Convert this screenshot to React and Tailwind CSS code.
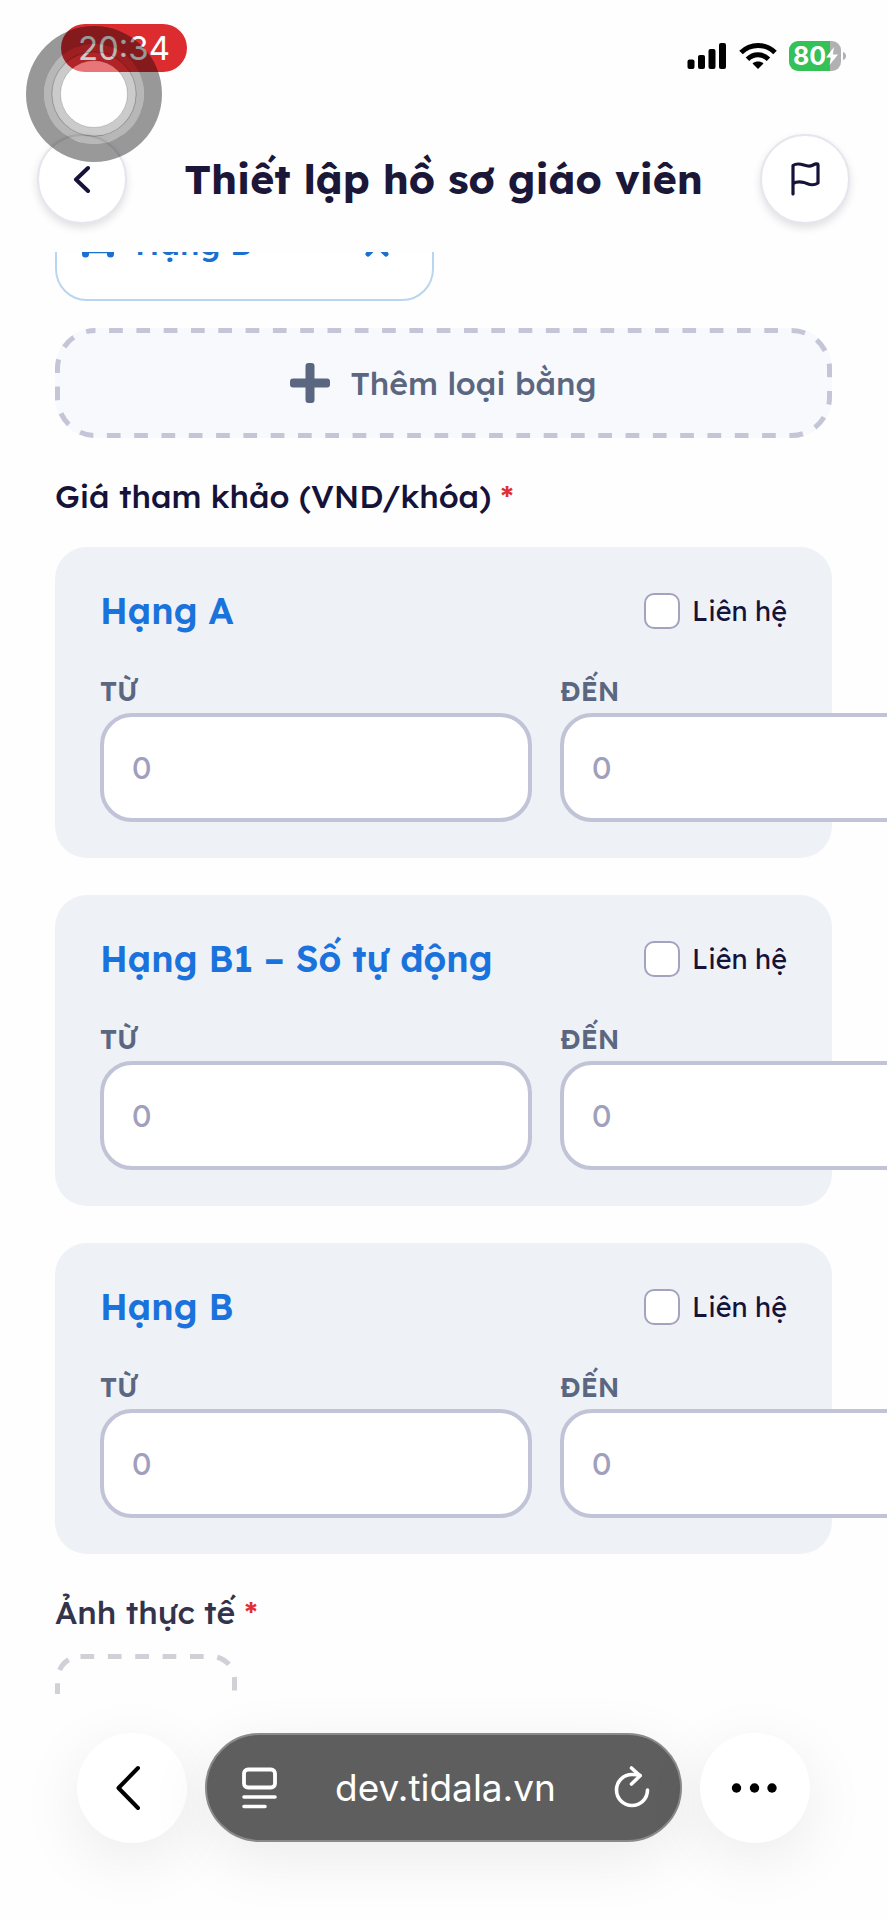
import React, { useState } from "react";

const licenseClasses = [
  { id: "a", name: "Hạng A" },
  { id: "b1", name: "Hạng B1 – Số tự động" },
  { id: "b", name: "Hạng B" },
];

const DashedBorder = ({ radius, dash, offset, className }) => (
  <svg
    className={`absolute inset-0 h-full w-full fill-none ${className}`}
    aria-hidden="true"
  >
    <rect
      x="2.5"
      y="2.5"
      rx={radius}
      className="h-[calc(100%-5px)] w-[calc(100%-5px)]"
      strokeWidth="5"
      strokeDasharray={dash}
      strokeDashoffset={offset}
    />
  </svg>
);

const StatusBar = () => (
  <div className="flex h-24 items-center justify-between pl-[61px] pr-[41px]">
    <span className="flex h-12 w-[126px] items-center justify-center rounded-full bg-[#dc2c30] font-['Inter',sans-serif] text-[33px] leading-10 text-white">
      20:34
    </span>

    <div className="flex items-center pt-4">
      {/* Signal */}
      <svg className="h-7 w-10" viewBox="0 0 40 28" aria-hidden="true">
        <rect x="0.5" y="17.5" width="7" height="9.5" rx="2" />
        <rect x="11" y="13" width="7" height="14" rx="2" />
        <rect x="21.5" y="7" width="7" height="20" rx="2" />
        <rect x="32" y="1" width="7" height="26" rx="2" />
      </svg>
      {/* Wifi */}
      <svg className="ml-3 h-7 w-[38px]" viewBox="0 0 38 28" aria-hidden="true">
        <g fill="none" stroke="#000" strokeWidth="5">
          <path d="M2 10.5C11.500 1 26.500 1 36 10.500" />
          <path d="M8.500 17.200C14.500 11.300 23.500 11.300 29.500 17.200" />
        </g>
        <path d="M13.500 21.500C16.500 18.900 21.500 18.900 24.500 21.500L19 27z" />
      </svg>
      {/* Battery */}
      <div className="ml-3 flex h-[30px] w-[52px] items-center rounded-[9px] bg-[linear-gradient(90deg,#34c157_79%,#b1b1b3_79%)] pl-1">
        <span className="font-['Inter',sans-serif] text-[25px] leading-[30px] font-bold text-white">
          80
        </span>
        <svg className="h-[18px] w-3 shrink-0" viewBox="0 0 12 18" aria-hidden="true">
          <path d="M8 0L0 10.500H5L3.500 18L12 7.500H6.800z" fill="#fff" />
        </svg>
      </div>
      <svg className="ml-[2px] h-2 w-[3px]" viewBox="0 0 3 8" aria-hidden="true">
        <path d="M0 0C4 1 4 7 0 8z" fill="#b1b1b3" />
      </svg>
    </div>
  </div>
);

const AssistiveTouch = () => (
  <div className="pointer-events-none absolute top-[26px] left-[26px] z-20">
    <svg className="h-[136px] w-[136px]" viewBox="0 0 136 136" aria-hidden="true">
      <path
        fillRule="evenodd"
        fill="#000"
        fillOpacity="0.4"
        d="M68 0a68 68 0 1 0 0 136a68 68 0 1 0 0-136zM68 18a50 50 0 1 1 0 100a50 50 0 1 1 0-100z"
      />
      <circle cx="68" cy="68" r="46" fill="none" stroke="#000" strokeOpacity="0.28" strokeWidth="8" />
      <circle cx="68" cy="68" r="38" fill="none" stroke="#000" strokeOpacity="0.2" strokeWidth="9" />
      <circle cx="68" cy="68" r="42" fill="none" stroke="#000" strokeOpacity="0.12" strokeWidth="1" />
      <circle cx="68" cy="68" r="33.500" fill="#fff" fillOpacity="0.35" stroke="#000" strokeOpacity="0.18" strokeWidth="1" />
    </svg>
  </div>
);

const PriceCard = ({ id, name }) => {
  const [contact, setContact] = useState(false);

  return (
    <section className="rounded-[32px] bg-[#eef1f6] px-[45px] pt-[45px] pb-9">
      <div className="flex items-center justify-between">
        <h2 className="text-[36px] leading-[38px] font-semibold text-[#1a73dc]">{name}</h2>
        <label className="flex items-center gap-3 text-[27px] leading-[38px] text-[#16133a]">
          <input
            type="checkbox"
            checked={contact}
            onChange={(e) => setContact(e.target.checked)}
            className="h-9 w-9 appearance-none rounded-[10px] border-2 border-[#a3a3bf] bg-white checked:bg-[#1a73dc]"
          />
          Liên hệ
        </label>
      </div>

      <div className="mt-[41px] flex gap-7">
        {[
          ["from", "TỪ"],
          ["to", "ĐẾN"],
        ].map(([key, label]) => (
          <div key={key} className="shrink-0">
            <label
              htmlFor={`${id}-${key}`}
              className="mb-[2px] block text-[27px] leading-10 font-semibold text-[#5b6780]"
            >
              {label}
            </label>
            <input
              id={`${id}-${key}`}
              type="text"
              inputMode="numeric"
              placeholder="0"
              className="block h-[109px] w-[432px] rounded-[32px] border-4 border-[#c1c3d7] bg-white px-7 pb-[2px] text-[32px] placeholder:text-[#a09fbd]"
            />
          </div>
        ))}
      </div>
    </section>
  );
};

const FieldTitle = ({ children, className }) => (
  <h2 className={`text-[32px] leading-[42px] font-medium ${className}`}>
    {children} <span className="text-[#e02f35]">*</span>
  </h2>
);

const App = () => {
  return (
    <div className="relative flex h-screen flex-col overflow-hidden bg-[#fefefe] font-['Lexend','Inter',sans-serif]">
      <AssistiveTouch />

      <header className="h-[252px] shrink-0">
        <StatusBar />
        <div className="flex items-center justify-between px-[37px] pt-[38px]">
          <button
            aria-label="Quay lại"
            className="flex h-[90px] w-[90px] items-center justify-center rounded-full border-2 border-[#e6e6ee] bg-white shadow-[0_4px_8px_rgba(0,0,0,0.12)]"
          >
            <svg className="h-7 w-7" viewBox="0 0 28 28" fill="none" aria-hidden="true">
              <path d="M20 3L8 14.500L20 26" stroke="#16133a" strokeWidth="4" strokeLinecap="round" strokeLinejoin="round" />
            </svg>
          </button>
          <h1 className="text-[41px] leading-[48px] font-bold text-[#1a1739]">
            Thiết lập hồ sơ giáo viên
          </h1>
          <button
            aria-label="Báo cáo"
            className="flex h-[90px] w-[90px] items-center justify-center rounded-full border-2 border-[#e6e6ee] bg-white shadow-[0_4px_8px_rgba(0,0,0,0.12)]"
          >
            <svg className="h-10 w-10" viewBox="0 0 40 40" fill="none" aria-hidden="true">
              <path
                d="M8 35V6.500C15 1.500 21 9.500 27 6.500C30 5 33 4 33 6V24C27 28 23 24.500 19 23.500C15 22.500 11.500 22.500 8 24.500"
                stroke="#16133a"
                strokeWidth="3.200"
                strokeLinecap="round"
                strokeLinejoin="round"
              />
            </svg>
          </button>
        </div>
      </header>

      <main className="min-h-0 flex-1 overflow-hidden px-[55px]">
        {/* Selected license, scrolled partly under the header */}
        <div className="-mt-[67px] flex h-[116px] w-[379px] items-center rounded-[32px] border-2 border-[#b9d5ef] bg-white pr-10 pl-6 text-[#1a6fd0]">
          <svg className="h-9 w-9" viewBox="0 0 36 36" fill="none" stroke="currentColor" aria-hidden="true">
            <path d="M3 16L7 5H27L31 16V27.500H3zM3 16H31" strokeWidth="1.500" />
            <path d="M4.500 23V29M29.500 23V29" strokeWidth="7" strokeLinecap="round" />
          </svg>
          <span className="ml-[18px] text-[32px] leading-10 font-medium">Hạng B</span>
          <button aria-label="Xóa" className="ml-auto">
            <svg className="h-8 w-8" viewBox="0 0 32 32" fill="none" aria-hidden="true">
              <path d="M8 9L26 27M26 9L8 27" stroke="currentColor" strokeWidth="5" strokeLinecap="round" />
            </svg>
          </button>
        </div>

        <button className="relative mt-[27px] flex h-[110px] w-full items-center justify-center gap-5 rounded-[40px] bg-[#f8f9fc] text-[32px] font-medium text-[#5b6780]">
          <DashedBorder radius="38" dash="13.7 13.6" offset="13.7" className="stroke-[#c5c5d8]" />
          <svg className="h-10 w-10" viewBox="0 0 40 40" fill="currentColor" aria-hidden="true">
            <rect x="15.500" y="0" width="9" height="40" rx="3" />
            <rect x="0" y="15.500" width="40" height="9" rx="3" />
          </svg>
          Thêm loại bằng
        </button>

        <FieldTitle className="mt-[37px] text-[#16133a]">Giá tham khảo (VND/khóa)</FieldTitle>

        <div className="mt-[30px] flex flex-col gap-[37px]">
          {licenseClasses.map((item) => (
            <PriceCard key={item.id} id={item.id} name={item.name} />
          ))}
        </div>

        <FieldTitle className="mt-[37px] text-[#33344c]">Ảnh thực tế</FieldTitle>
        <button aria-label="Thêm ảnh" className="relative mt-[21px] block h-[176px] w-[182px] rounded-[26px]">
          <DashedBorder radius="23" dash="13.7 13.67" offset="0" className="stroke-[#d0d0d6]" />
        </button>
      </main>

      {/* Browser toolbar */}
      <footer className="flex h-[226px] shrink-0 justify-center gap-[18px] px-[77px] pt-[39px]">
        <button
          aria-label="Trang trước"
          className="flex h-[110px] w-[110px] shrink-0 items-center justify-center rounded-full bg-white shadow-[0_16px_64px_rgba(0,0,0,0.08)]"
        >
          <svg className="h-12 w-12" viewBox="0 0 48 48" fill="none" aria-hidden="true">
            <path d="M30 4L10.500 24L30 44" stroke="#000" strokeWidth="4" strokeLinecap="round" strokeLinejoin="round" />
          </svg>
        </button>
        <div className="flex h-[109px] flex-1 items-center justify-between rounded-full border-2 border-[#8a8a8a] bg-[#5e5e5e] pr-7 pl-8 text-white shadow-[0_16px_64px_rgba(0,0,0,0.08)]">
          <button aria-label="Trình đọc">
            <svg className="h-11 w-10" viewBox="0 0 40 44" fill="none" stroke="currentColor" strokeLinecap="round" aria-hidden="true">
              <rect x="5" y="3.500" width="31" height="18" rx="4" strokeWidth="3.800" />
              <path d="M5 31H36M5 40.500H26" strokeWidth="3.600" />
            </svg>
          </button>
          <a href="#" className="font-['Inter',sans-serif] text-[37px] leading-[44px]">
            dev.tidala.vn
          </a>
          <button aria-label="Tải lại">
            <svg className="h-11 w-10" viewBox="0 0 40 44" fill="none" stroke="currentColor" strokeWidth="3.600" strokeLinecap="round" strokeLinejoin="round" aria-hidden="true">
              <path d="M35.500 24A15.500 15.500 0 1 1 20 8.500C23 8.500 26 8.700 28 9.500" />
              <path d="M19.500 2L28 9.800L19.500 18" />
            </svg>
          </button>
        </div>
        <button
          aria-label="Thêm"
          className="flex h-[110px] w-[110px] shrink-0 items-center justify-center rounded-full bg-white shadow-[0_16px_64px_rgba(0,0,0,0.08)]"
        >
          <svg className="h-3 w-12" viewBox="0 0 48 12" aria-hidden="true">
            <circle cx="5.500" cy="6" r="4.700" />
            <circle cx="23.500" cy="6" r="4.700" />
            <circle cx="41" cy="6" r="4.700" />
          </svg>
        </button>
      </footer>
    </div>
  );
};

export default App;
